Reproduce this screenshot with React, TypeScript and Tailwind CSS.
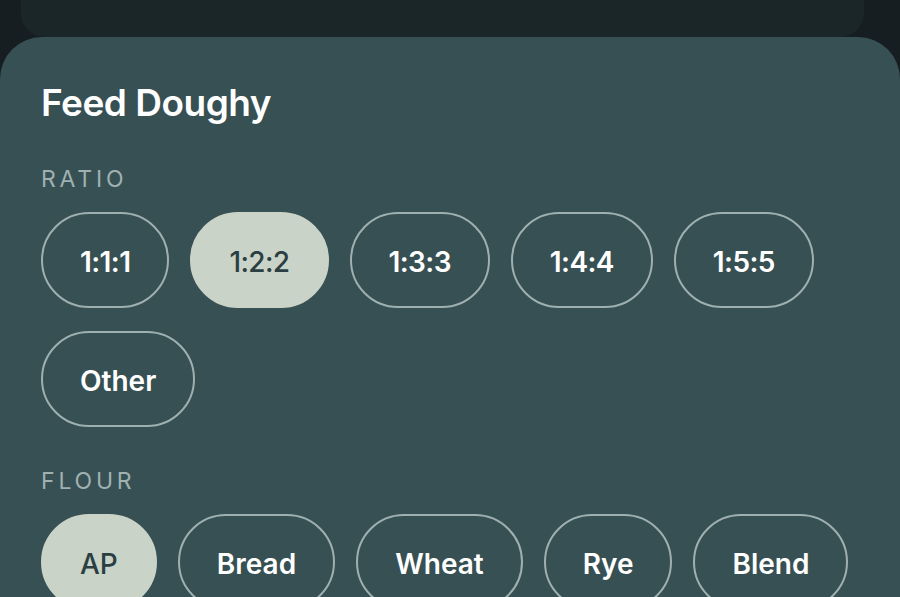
import React from "react";

const ratios = ["1:1:1", "1:2:2", "1:3:3", "1:4:4", "1:5:5", "Other"];
const flours = ["AP", "Bread", "Wheat", "Rye", "Blend"];

function Chip({ label, selected }: { label: string; selected?: boolean }) {
  const numeric = label.includes(":");
  const base = selected
    ? "h-[96px] px-[37px] pt-[4px] rounded-full border-2 border-[#cad3c7] bg-[#cad3c7] text-[#2b3f42] text-[28px] font-medium"
    : "h-[96px] px-[37px] pt-[4px] rounded-full border-2 border-[#9fb0b0] bg-transparent text-white text-[28px] font-semibold";
  return (
    <button
      className={numeric ? base + " tracking-[-0.6px]" : base}
      style={{ fontFamily: "Inter, 'Noto Sans', sans-serif" }}
    >
      {label}
    </button>
  );
}

export default function App() {
  return (
    <div className="w-[900px] h-[597px] overflow-hidden bg-[#161e21] flex flex-col">
      <div className="ml-[21px] w-[843px] h-[37px] shrink-0 bg-[#1a2628] rounded-b-[24px]" />
      <div
        className="flex-1 bg-[#375053] rounded-t-[42px] px-[41px] pt-[44px]"
        style={{ fontFamily: "Inter, 'Noto Sans', sans-serif" }}
      >
        <h1 className="text-[37px] leading-[44px] font-semibold text-white tracking-[-0.5px]">
          Feed Doughy
        </h1>
        <div className="mt-[40px] text-[23px] leading-[28px] tracking-[3.8px] text-[#9fb1b1]">
          RATIO
        </div>
        <div className="mt-[19px] flex flex-wrap gap-x-[21px] gap-y-[23px] w-[800px]">
          {ratios.map((r) => (
            <Chip key={r} label={r} selected={r === "1:2:2"} />
          ))}
        </div>
        <div className="mt-[40px] text-[23px] leading-[28px] tracking-[3.8px] text-[#9fb1b1]">
          FLOUR
        </div>
        <div className="mt-[19px] flex gap-x-[21px]">
          {flours.map((f) => (
            <Chip key={f} label={f} selected={f === "AP"} />
          ))}
        </div>
      </div>
    </div>
  );
}
